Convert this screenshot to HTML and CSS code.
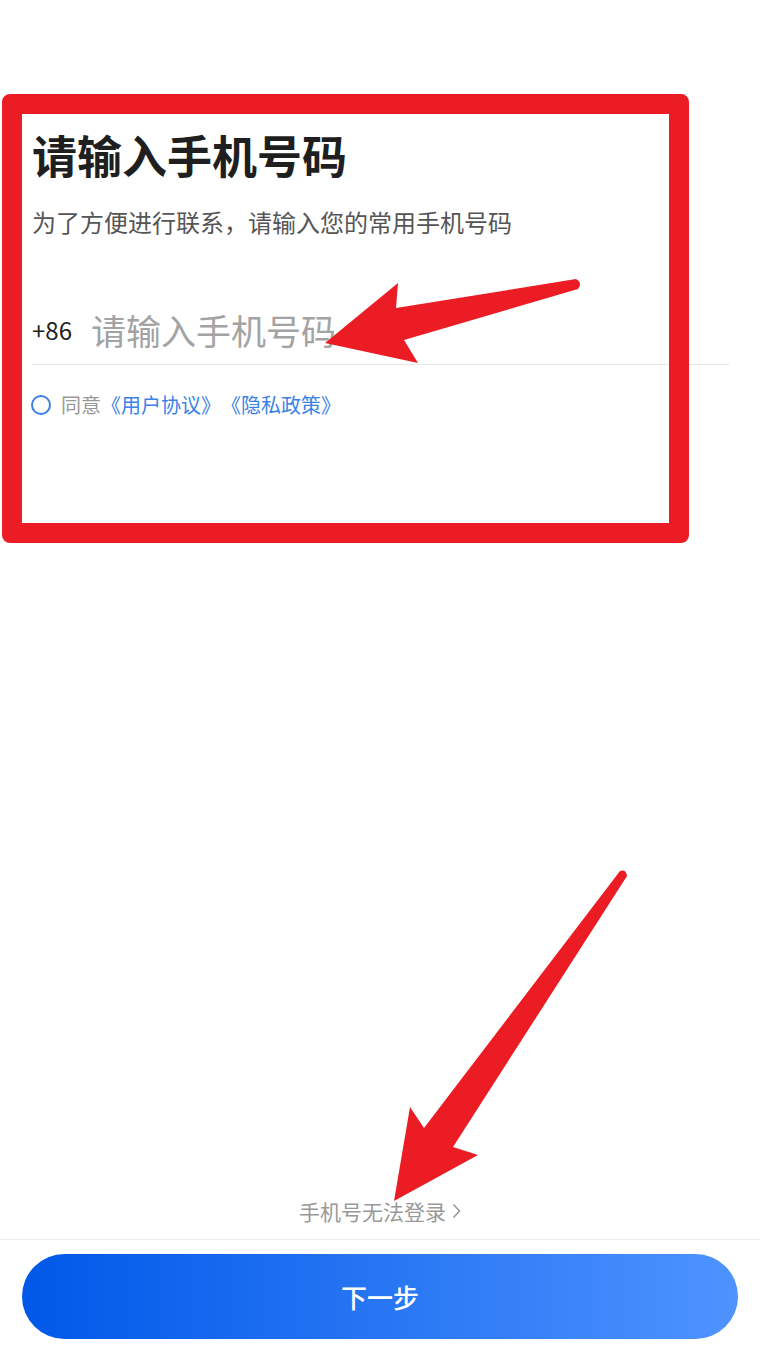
FILE: index.html
```html
<!DOCTYPE html>
<html lang="zh-CN">

<head>
    <meta charset="UTF-8">
    <meta name="viewport" content="width=device-width, initial-scale=1.0">
    <link rel="stylesheet" href="styles.css">
    <title>请输入手机号码</title>
</head>

<body>
    <div id="page">
        <div class="content">
            <h1 class="title">请输入手机号码</h1>
            <p class="sub">为了方便进行联系，请输入您的常用手机号码</p>

            <div class="phone-row">
                <span class="code">+86</span>
                <span class="placeholder">请输入手机号码</span>
            </div>

            <div class="agree">
                <span class="radio"></span>
                <span class="agree-text">同意</span>
                <span class="link">《用户协议》</span>
                <span class="link">《隐私政策》</span>
            </div>
        </div>

        <div class="footer">
            <div class="help">
                <span>手机号无法登录</span>
                <svg class="chev" width="9" height="16" viewBox="0 0 9 16">
                    <polyline points="1.5,1.5 7.5,8 1.5,14.5" fill="none" stroke="#999" stroke-width="1.6" />
                </svg>
            </div>
            <div class="bar">
                <div class="btn">下一步</div>
            </div>
        </div>
    </div>

    <!-- annotations drawn over the screenshot -->
    <div class="mark-box"></div>
    <svg class="arrows" width="760" height="1355" viewBox="0 0 760 1355">
        <path fill="#ec1c24"
            d="M576,279 L396,308 L398,283 L325,343 L418,363 L404,340 L578,289 Q583,283 576,279 Z" />
        <path fill="#ec1c24"
            d="M620,871 L424,1128 L410,1107 L394,1201 L478,1155 L453,1147 L627,876 Q626,869 620,871 Z" />
    </svg>
</body>

</html>
```

FILE: styles.css
```css
body {
    margin: 0;
    background: white;
    font-family: "Noto Sans CJK SC", "Noto Sans", sans-serif;
    color: #222;
}

#page {
    position: relative;
    width: 760px;
    height: 1355px;
    display: flex;
    flex-direction: column;
}

.content {
    padding: 124px 30px 0 32px;
}

.title {
    margin: 0;
    font-size: 45px;
    line-height: 62px;
    font-weight: bold;
    color: #1f1f1f;
}

.sub {
    margin: 19px 0 0 0;
    font-size: 24px;
    line-height: 34px;
    color: #555;
}

.phone-row {
    display: flex;
    align-items: center;
    margin-top: 55px;
    height: 70px;
    border-bottom: 1px solid #e8e8e8;
}

.code {
    font-size: 24px;
    color: #222;
    width: 59px;
}

.placeholder {
    font-size: 35px;
    color: #a3a3a3;
}

.agree {
    display: flex;
    align-items: center;
    margin-top: 25px;
    font-size: 20px;
}

.radio {
    width: 16px;
    height: 16px;
    border: 2px solid #3b7fe6;
    border-radius: 50%;
    margin-right: 10px;
    margin-left: -1px;
}

.agree-text {
    color: #999;
}

.link {
    color: #3b82e6;
}

.footer {
    margin-top: auto;
}

.help {
    display: flex;
    justify-content: center;
    align-items: center;
    gap: 6px;
    font-size: 21px;
    color: #999;
    height: 40px;
    margin-bottom: 8px;
}

.bar {
    border-top: 1px solid #ececec;
    padding: 14px 22px 16px 22px;
}

.btn {
    height: 85px;
    border-radius: 43px;
    background: linear-gradient(to right, #0058e8, #4e93ff);
    color: white;
    font-size: 26px;
    font-weight: 500;
    display: flex;
    align-items: center;
    justify-content: center;
}

.mark-box {
    position: absolute;
    left: 2px;
    top: 94px;
    width: 687px;
    height: 449px;
    box-sizing: border-box;
    border: 20px solid #ec1c24;
    border-radius: 8px;
}

.arrows {
    position: absolute;
    left: 0;
    top: 0;
}
```
